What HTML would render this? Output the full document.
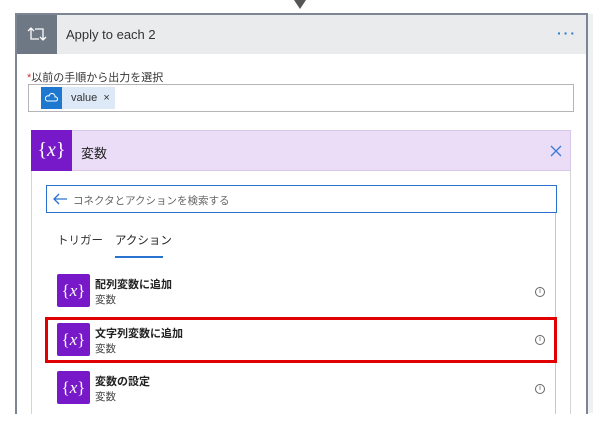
<!DOCTYPE html>
<html><head><meta charset="utf-8"><style>
*{margin:0;padding:0;box-sizing:border-box}
body{width:603px;height:425px;background:#fff;position:relative;overflow:hidden;font-family:"Liberation Sans","Noto Sans CJK JP",sans-serif;color:#333}
.a{position:absolute}
.vx{background:#7719c9;color:#fff;font-family:"Liberation Serif",serif;display:flex;align-items:center;justify-content:center;border-radius:2px}
.vx i{font-style:italic}
.info{width:10px;height:10px;border:1px solid #666;border-radius:50%;font-size:7px;line-height:8px;text-align:center;color:#555}
.t{font-size:11px;color:#222;font-weight:bold}
.s{font-size:10.5px;color:#444}
</style></head><body>
<div class="a" style="left:294px;top:0;width:0;height:0;border-left:6px solid transparent;border-right:6px solid transparent;border-top:9px solid #555"></div>
<div class="a" style="left:588px;top:14px;width:5px;height:399px;background:#eef0f2"></div>
<div class="a" style="left:15px;top:13px;width:573px;height:402px;border:2px solid #7d8594;border-bottom:none;background:#fff"></div>
<div class="a" style="left:17px;top:15px;width:569px;height:39px;background:#eaebed"></div>
<div class="a" style="left:17px;top:15px;width:40px;height:39px;background:#6e7885"></div>
<svg class="a" style="left:27px;top:26px" width="20" height="16" viewBox="0 0 20 16" fill="none" stroke="#fff" stroke-width="1.3"><path d="M1 5 L4 2 L7 5 M4 2 V13 H12"/><path d="M8 3 H16 V14 M13 11 L16 14 L19 11"/></svg>
<div class="a" style="left:66px;top:27px;font-size:13px;color:#333">Apply to each 2</div>
<div class="a" style="left:557px;top:25px;font-size:14px;color:#2f7bd4;letter-spacing:2px;font-weight:bold">···</div>
<div class="a" style="left:27px;top:69px;font-size:11px;color:#333"><span style="color:#c33">*</span>以前の手順から出力を選択</div>
<div class="a" style="left:28px;top:84px;width:546px;height:28px;border:1px solid #b5b5b5"></div>
<div class="a" style="left:41px;top:87px;width:74px;height:22px;background:#dde9f7"></div>
<div class="a" style="left:41px;top:87px;width:21px;height:22px;background:#1e78d0"></div>
<svg class="a" style="left:45px;top:92px" width="13" height="11" viewBox="0 0 13 11" fill="none" stroke="#fff" stroke-width="1"><path d="M2 9 H11 A2 2 0 0 0 10 5 A3 3 0 0 0 4 4 A2.5 2.5 0 0 0 2 9Z"/></svg>
<div class="a" style="left:71px;top:92px;font-size:11px;color:#333">value&nbsp;&nbsp;×</div>
<div class="a" style="left:31px;top:130px;width:540px;height:290px;border:1px solid #d4d4d4;background:#fff"></div>
<div class="a" style="left:31px;top:130px;width:540px;height:41px;background:#ebdcf8;border:1px solid #d8c8e8"></div>
<div class="a vx" style="left:31px;top:130px;width:41px;height:41px;font-size:20px;border-radius:0">{<i>x</i>}</div>
<div class="a" style="left:81px;top:143px;font-size:13px;color:#222">変数</div>
<svg class="a" style="left:550px;top:145px" width="12" height="12" stroke="#3a7bd5" stroke-width="1.3"><path d="M1 1L11 11M11 1L1 11"/></svg>
<div class="a" style="left:555px;top:185px;width:1px;height:235px;background:#c8c8c8"></div>
<div class="a" style="left:46px;top:185px;width:511px;height:28px;border:1.5px solid #2a72d0;background:#fff"></div>
<svg class="a" style="left:52px;top:192px" width="16" height="14" fill="none" stroke="#2a72d0" stroke-width="1.3"><path d="M15 7H2M7 2L2 7L7 12"/></svg>
<div class="a" style="left:73px;top:193px;font-size:10.5px;color:#666">コネクタとアクションを検索する</div>
<div class="a" style="left:57px;top:232px;font-size:11.5px;color:#333">トリガー</div>
<div class="a" style="left:115px;top:232px;font-size:11.5px;color:#222">アクション</div>
<div class="a" style="left:115px;top:256px;width:48px;height:2px;background:#2a72d0"></div>

<div class="a vx" style="left:57px;top:274px;width:33px;height:33px;font-size:17px">{<i>x</i>}</div>
<div class="a t" style="left:95px;top:276px">配列変数に追加</div>
<div class="a s" style="left:95px;top:292px">変数</div>
<div class="a info" style="left:535px;top:287px">i</div>

<div class="a" style="left:45px;top:317px;width:512px;height:46px;border:3px solid #e00000"></div>
<div class="a vx" style="left:57px;top:323px;width:33px;height:33px;font-size:17px">{<i>x</i>}</div>
<div class="a t" style="left:95px;top:325px">文字列変数に追加</div>
<div class="a s" style="left:95px;top:341px">変数</div>
<div class="a info" style="left:535px;top:335px">i</div>

<div class="a vx" style="left:57px;top:371px;width:33px;height:33px;font-size:17px">{<i>x</i>}</div>
<div class="a t" style="left:95px;top:373px">変数の設定</div>
<div class="a s" style="left:95px;top:389px">変数</div>
<div class="a info" style="left:535px;top:384px">i</div>
<div class="a" style="left:0;top:414px;width:603px;height:11px;background:#fff"></div>
</body></html>
